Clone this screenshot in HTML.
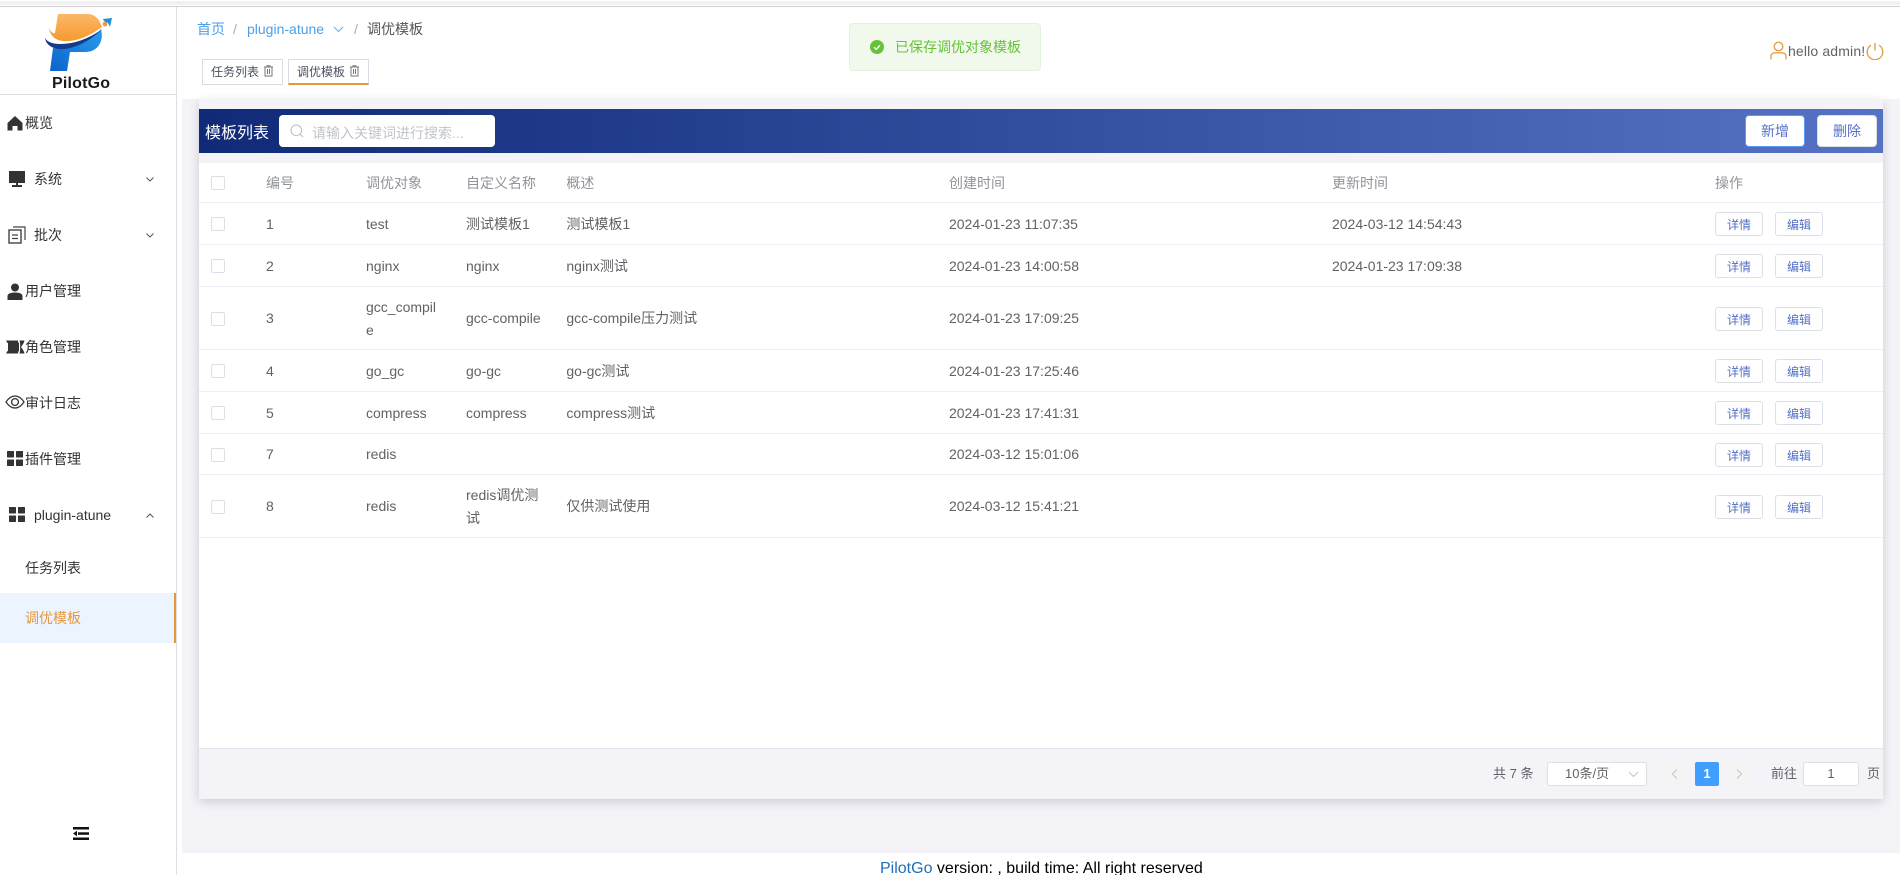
<!DOCTYPE html>
<html lang="zh-CN">
<head>
<meta charset="utf-8">
<title>PilotGo</title>
<style>
*{box-sizing:border-box}
html,body{margin:0;padding:0;width:1900px;height:875px;overflow:hidden;background:#fff}
body{position:relative;font-family:"Liberation Sans","Noto Sans CJK SC",sans-serif;font-size:14px;color:#606266}
.a{position:absolute;white-space:nowrap}
svg{position:absolute;display:block}
.m{color:#333;line-height:20px;font-size:14px}
table{position:absolute;left:199px;top:163px;width:1684px;border-collapse:collapse;table-layout:fixed;background:#fff}
td,th{padding:2px 10px 0;border-bottom:1px solid #ebeef5;font-weight:400;text-align:left;line-height:23px;font-size:14px;word-break:break-all;color:#606266}
th{color:#909399}
.cb{display:block;width:14px;height:14px;border:1px solid #dcdfe6;border-radius:2px;background:#fff;margin-left:2px}
.b{display:inline-block;position:relative;top:0;width:48px;height:24px;line-height:24px;border:1px solid #dcdfe6;border-radius:3px;background:#fff;color:#5470c6;font-size:12px;text-align:center;vertical-align:middle;margin-right:12px}
.hb{position:absolute;top:115px;height:32px;line-height:31px;width:60px;text-align:center;background:#fff;border:1px solid #dcdfe6;border-radius:4px;color:#5470c6;font-size:14px}
.tab{position:absolute;top:59px;height:26px;width:81px;border:1px solid #d8dce5;background:#fff;font-size:12px;line-height:24px;padding-left:8px;color:#495060}
</style>
</head>
<body>
<!-- top strip -->
<div class="a" style="left:0;top:1px;width:1900px;height:4px;background:#f1f1f3"></div>
<div class="a" style="left:0;top:6px;width:1900px;height:1px;background:#cfcfd2"></div>

<!-- sidebar -->
<div class="a" style="left:176px;top:7px;width:1px;height:868px;background:#dcdfe6"></div>
<div class="a" style="left:0;top:94px;width:176px;height:1px;background:#dcdfe6"></div>

<svg style="left:0;top:0" width="120" height="80" viewBox="0 0 120 80">
<defs>
<linearGradient id="o" x1="0" y1="0" x2="0" y2="1"><stop offset="0" stop-color="#fbb868"/><stop offset="1" stop-color="#f59a2e"/></linearGradient>
<linearGradient id="bl" x1="0" y1="1" x2="1" y2="0"><stop offset="0" stop-color="#0b63cc"/><stop offset="1" stop-color="#2a9cee"/></linearGradient>
</defs>
<path d="M58 14H88C95 14 100 20 102 27C90 36 76 42 63 41C54 40 50 35 49 28C51 32 53 34 55 33Z" fill="url(#o)"/>
<path d="M101 29C104 40 99 52 85 52H70L67 71H50L53 48C70 49 90 41 101 29Z" fill="url(#bl)"/>
<path d="M45 38C46 46 55 50 64 49C66 49 68 48.500 70 48C82 45 93 38 101 30C88 39 74 44 60 44C53 44 47 42 45 38Z" fill="#143c8c"/>
<circle cx="105" cy="24" r="2.400" fill="#f59a2e"/>
<path d="M103 19L112 18L110 27L108 23L104 21Z" fill="#1f8fe0"/>
</svg>
<div class="a" style="left:52px;top:75px;width:60px;font-size:16px;font-weight:700;line-height:18px;color:#1a1a1a;letter-spacing:.2px">PilotGo</div>

<!-- menu -->
<svg style="left:7px;top:115px" width="16" height="16" viewBox="0 0 16 16"><path d="M8 1L0.500 8V15.500H5.500V11H10.500V15.500H15.500V8Z" fill="#333"/></svg>
<div class="a m" style="left:25px;top:113px">概览</div>

<svg style="left:9px;top:171px" width="16" height="17" viewBox="0 0 16 17"><rect x="0" y="0" width="16" height="12" fill="#333"/><rect x="7" y="12" width="2" height="2" fill="#333"/><rect x="3" y="14" width="10" height="2" fill="#333"/></svg>
<div class="a m" style="left:34px;top:169px">系统</div>
<svg style="left:146px;top:177px" width="8" height="5" viewBox="0 0 8 5"><path d="M.5 .5L4 4L7.500 .5" fill="none" stroke="#555" stroke-width="1"/></svg>

<svg style="left:8px;top:226px" width="18" height="18" viewBox="0 0 18 18"><rect x="1" y="4" width="12" height="13" fill="none" stroke="#444" stroke-width="1.400"/><path d="M5 1H17V14" fill="none" stroke="#444" stroke-width="1.200"/><path d="M4 9H10M4 12.500H10" stroke="#444" stroke-width="1.300"/></svg>
<div class="a m" style="left:34px;top:225px">批次</div>
<svg style="left:146px;top:233px" width="8" height="5" viewBox="0 0 8 5"><path d="M.5 .5L4 4L7.500 .5" fill="none" stroke="#555" stroke-width="1"/></svg>

<svg style="left:7px;top:283px" width="16" height="17" viewBox="0 0 16 17"><circle cx="8" cy="4.500" r="4" fill="#333"/><path d="M0.500 17V13C0.500 11 3 9.500 8 9.500S15.500 11 15.500 13V17Z" fill="#333"/></svg>
<div class="a m" style="left:25px;top:281px">用户管理</div>

<svg style="left:6px;top:340px" width="19" height="14" viewBox="0 0 19 14"><path d="M0 0.500H12C12 2 12.500 3 13 3V11C12.500 11 12 12 12 13.500H0C1 12 1 11 2 11V3C1 3 1 2 0 0.500Z" fill="#333"/><path d="M13.500 0.500H18.500C18 3 16.500 5 15 7C16.500 9 18 11 18.500 13.500H13.500C14 11 14.500 9 14 7C14.500 5 14 3 13.500 0.500Z" fill="#333"/></svg>
<div class="a m" style="left:25px;top:337px">角色管理</div>

<svg style="left:5px;top:395px" width="20" height="14" viewBox="0 0 20 14"><path d="M1 7C4 2.500 7 1 10 1S16 2.500 19 7C16 11.500 13 13 10 13S4 11.500 1 7Z" fill="none" stroke="#333" stroke-width="1.200"/><circle cx="10" cy="7" r="3.400" fill="none" stroke="#333" stroke-width="1.300"/></svg>
<div class="a m" style="left:25px;top:393px">审计日志</div>

<svg style="left:7px;top:451px" width="16" height="15" viewBox="0 0 16 15"><rect width="7" height="6.500" rx=".5" fill="#333"/><rect x="9" width="7" height="6.500" rx=".5" fill="#333"/><rect y="8.500" width="7" height="6.500" rx=".5" fill="#333"/><rect x="9" y="8.500" width="7" height="6.500" rx=".5" fill="#333"/></svg>
<div class="a m" style="left:25px;top:449px">插件管理</div>

<svg style="left:9px;top:507px" width="16" height="15" viewBox="0 0 16 15"><rect width="7" height="6.500" rx=".5" fill="#333"/><rect x="9" width="7" height="6.500" rx=".5" fill="#333"/><rect y="8.500" width="7" height="6.500" rx=".5" fill="#333"/><rect x="9" y="8.500" width="7" height="6.500" rx=".5" fill="#333"/></svg>
<div class="a m" style="left:34px;top:505px">plugin-atune</div>
<svg style="left:146px;top:513px" width="8" height="5" viewBox="0 0 8 5"><path d="M.5 4.500L4 1L7.500 4.500" fill="none" stroke="#555" stroke-width="1"/></svg>

<div class="a m" style="left:25px;top:558px">任务列表</div>
<div class="a" style="left:0;top:593px;width:174px;height:50px;background:#ecf5ff"></div>
<div class="a" style="left:174px;top:593px;width:2px;height:50px;background:#e6973a"></div>
<div class="a m" style="left:25px;top:608px;color:#e6973a">调优模板</div>

<svg style="left:73px;top:827px" width="16" height="13" viewBox="0 0 16 13"><rect width="16" height="2.500" fill="#111"/><rect x="5" y="5.300" width="11" height="2.500" fill="#111"/><rect y="10.500" width="16" height="2.500" fill="#111"/><path d="M0 6.500L4 3.800V9.200Z" fill="#111"/></svg>

<!-- breadcrumb -->
<div class="a" style="left:197px;top:19px;line-height:20px;color:#4a9fe8">首页</div>
<div class="a" style="left:233px;top:19px;line-height:20px;color:#a8abb2">/</div>
<div class="a" style="left:247px;top:19px;line-height:20px;color:#4a9fe8">plugin-atune</div>
<svg style="left:333px;top:26px" width="11" height="7" viewBox="0 0 11 7"><path d="M1 1L5.500 5.500L10 1" fill="none" stroke="#6aaee8" stroke-width="1"/></svg>
<div class="a" style="left:354px;top:19px;line-height:20px;color:#a8abb2">/</div>
<div class="a" style="left:367px;top:19px;line-height:20px;color:#555">调优模板</div>

<!-- tabs -->
<div class="tab" style="left:202px">任务列表</div>
<svg style="left:263px;top:65px" width="11" height="12" viewBox="0 0 11 12"><path d="M1 2H10M4 2V.7H7V2M2 2V11H9V2M4.500 4V9M6.500 4V9" fill="none" stroke="#777" stroke-width="1"/></svg>
<div class="tab" style="left:288px;border-bottom:2px solid #e6973a">调优模板</div>
<svg style="left:349px;top:65px" width="11" height="12" viewBox="0 0 11 12"><path d="M1 2H10M4 2V.7H7V2M2 2V11H9V2M4.500 4V9M6.500 4V9" fill="none" stroke="#777" stroke-width="1"/></svg>

<!-- toast -->
<div class="a" style="left:849px;top:23px;width:192px;height:48px;background:#f0f9eb;border:1px solid #e1f3d8;border-radius:4px"></div>
<svg style="left:870px;top:40px" width="14" height="14" viewBox="0 0 14 14"><circle cx="7" cy="7" r="7" fill="#67c23a"/><path d="M4 7.200L6.200 9.300L10 5.300" fill="none" stroke="#fff" stroke-width="1.300"/></svg>
<div class="a" style="left:895px;top:37px;line-height:20px;color:#67c23a">已保存调优对象模板</div>

<!-- user -->
<svg style="left:1770px;top:41px" width="17" height="19" viewBox="0 0 17 19"><circle cx="8.500" cy="5.500" r="4.300" fill="none" stroke="#e6a04a" stroke-width="1.400"/><path d="M1 18.500V15C1 13 3 11.800 5 11.800H12C14 11.800 16 13 16 15V18.500" fill="none" stroke="#e6a04a" stroke-width="1.400"/></svg>
<div class="a" style="left:1788px;top:41px;line-height:20px;color:#606266;letter-spacing:.15px">hello admin!</div>
<svg style="left:1866px;top:41px" width="18" height="19" viewBox="0 0 18 19"><path d="M5 4.200A7.800 7.800 0 1 0 13 4.200" fill="none" stroke="#e6a04a" stroke-width="1.400"/><path d="M9 2V9.500" stroke="#e6a04a" stroke-width="1.400"/></svg>

<!-- main bg -->
<div class="a" style="left:182px;top:99px;width:1718px;height:754px;background:#f3f3f8"></div>
<div class="a" style="left:199px;top:99px;width:1684px;height:700px;background:#fff;box-shadow:0 3px 10px rgba(0,0,0,.16)"></div>
<div class="a" style="left:199px;top:99px;width:1684px;height:64px;background:#f3f3f8"></div>
<div class="a" style="left:199px;top:109px;width:1684px;height:44px;background:linear-gradient(90deg,#102a78,#5672c5)"></div>
<div class="a" style="left:205px;top:122px;font-size:16px;line-height:24px;color:#fff">模板列表</div>
<div class="a" style="left:279px;top:115px;width:216px;height:32px;background:#fff;border-radius:4px"></div>
<svg style="left:290px;top:124px" width="14" height="14" viewBox="0 0 14 14"><circle cx="6.300" cy="6.300" r="5.300" fill="none" stroke="#b8bcc4" stroke-width="1"/><path d="M10.200 10.200L13 13" stroke="#b8bcc4" stroke-width="1"/></svg>
<div class="a" style="left:312px;top:123px;line-height:20px;color:#c0c4cc">请输入关键词进行搜索...</div>
<div class="hb" style="left:1745px;border-color:#5d9bf0">新增</div>
<div class="hb" style="left:1817px">删除</div>

<table>
<colgroup><col style="width:57px"><col style="width:100px"><col style="width:100px"><col style="width:100.400px"><col style="width:382.600px"><col style="width:383px"><col style="width:383px"><col style="width:178px"></colgroup>
<tr style="height:39px"><th><span class="cb"></span></th><th>编号</th><th>调优对象</th><th>自定义名称</th><th>概述</th><th>创建时间</th><th>更新时间</th><th>操作</th></tr>
<tr style="height:42px"><td><span class="cb"></span></td><td>1</td><td>test</td><td>测试模板1</td><td>测试模板1</td><td>2024-01-23 11:07:35</td><td>2024-03-12 14:54:43</td><td><span class="b">详情</span><span class="b">编辑</span></td></tr>
<tr style="height:42px"><td><span class="cb"></span></td><td>2</td><td>nginx</td><td>nginx</td><td>nginx测试</td><td>2024-01-23 14:00:58</td><td>2024-01-23 17:09:38</td><td><span class="b">详情</span><span class="b">编辑</span></td></tr>
<tr style="height:63px"><td><span class="cb"></span></td><td>3</td><td>gcc_compil<br>e</td><td>gcc-compile</td><td>gcc-compile压力测试</td><td>2024-01-23 17:09:25</td><td></td><td><span class="b">详情</span><span class="b">编辑</span></td></tr>
<tr style="height:42px"><td><span class="cb"></span></td><td>4</td><td>go_gc</td><td>go-gc</td><td>go-gc测试</td><td>2024-01-23 17:25:46</td><td></td><td><span class="b">详情</span><span class="b">编辑</span></td></tr>
<tr style="height:42px"><td><span class="cb"></span></td><td>5</td><td>compress</td><td>compress</td><td>compress测试</td><td>2024-01-23 17:41:31</td><td></td><td><span class="b">详情</span><span class="b">编辑</span></td></tr>
<tr style="height:41px"><td><span class="cb"></span></td><td>7</td><td>redis</td><td></td><td></td><td>2024-03-12 15:01:06</td><td></td><td><span class="b">详情</span><span class="b">编辑</span></td></tr>
<tr style="height:63px"><td><span class="cb"></span></td><td>8</td><td>redis</td><td>redis调优测试</td><td>仅供测试使用</td><td>2024-03-12 15:41:21</td><td></td><td><span class="b">详情</span><span class="b">编辑</span></td></tr>
</table>

<!-- pagination -->
<div class="a" style="left:199px;top:748px;width:1684px;height:51px;background:#f3f3f8;border-top:1px solid #e6e6ec"></div>
<div class="a" style="left:1493px;top:764px;font-size:13px;line-height:20px">共 7 条</div>
<div class="a" style="left:1547px;top:762px;width:100px;height:24px;background:#fff;border:1px solid #dcdfe6;border-radius:3px"></div>
<div class="a" style="left:1565px;top:764px;font-size:13px;line-height:20px">10条/页</div>
<svg style="left:1628px;top:771px" width="11" height="7" viewBox="0 0 11 7"><path d="M1 1L5.500 5.500L10 1" fill="none" stroke="#c0c4cc" stroke-width="1"/></svg>
<div class="a" style="left:1663px;top:762px;width:24px;height:24px;background:#f4f4f5;border-radius:2px"></div>
<svg style="left:1671px;top:769px" width="7" height="10" viewBox="0 0 7 10"><path d="M6 .5L1.500 5L6 9.500" fill="none" stroke="#c0c4cc" stroke-width="1"/></svg>
<div class="a" style="left:1695px;top:762px;width:24px;height:24px;line-height:24px;background:#409eff;border-radius:2px;color:#fff;font-size:13px;font-weight:700;text-align:center">1</div>
<div class="a" style="left:1727px;top:762px;width:24px;height:24px;background:#f4f4f5;border-radius:2px"></div>
<svg style="left:1736px;top:769px" width="7" height="10" viewBox="0 0 7 10"><path d="M1 .5L5.500 5L1 9.500" fill="none" stroke="#c0c4cc" stroke-width="1"/></svg>
<div class="a" style="left:1771px;top:764px;font-size:13px;line-height:20px">前往</div>
<div class="a" style="left:1803px;top:762px;width:56px;height:24px;line-height:22px;background:#fff;border:1px solid #dcdfe6;border-radius:3px;text-align:center;font-size:13px">1</div>
<div class="a" style="left:1867px;top:764px;font-size:13px;line-height:20px">页</div>

<!-- footer -->
<div class="a" style="left:880px;top:860px;font-size:16px;line-height:18px;color:#000"><span style="color:#1f6fb8">PilotGo</span> version: , build time: All right reserved</div>
</body>
</html>
